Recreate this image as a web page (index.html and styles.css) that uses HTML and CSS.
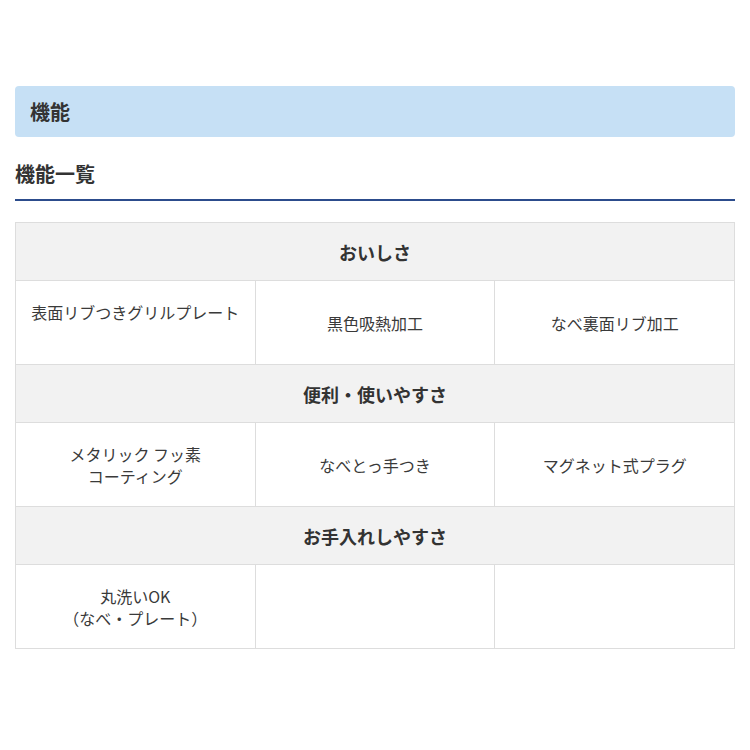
FILE: index.html
```html
<!DOCTYPE html>
<html lang="ja">
<head>
<meta charset="utf-8">
<link rel="stylesheet" href="styles.css">
</head>
<body>
<div class="page">
  <h2 class="section-title">機能</h2>
  <h3 class="sub-title">機能一覧</h3>
  <table class="features">
    <tr><th colspan="3">おいしさ</th></tr>
    <tr>
      <td>表面リブつきグリルプレート<br>&nbsp;</td>
      <td>黒色吸熱加工</td>
      <td>なべ裏面リブ加工</td>
    </tr>
    <tr><th colspan="3">便利・使いやすさ</th></tr>
    <tr>
      <td>メタリック フッ素<br>コーティング</td>
      <td>なべとっ手つき</td>
      <td>マグネット式プラグ</td>
    </tr>
    <tr><th colspan="3">お手入れしやすさ</th></tr>
    <tr>
      <td>丸洗いOK<br>（なべ・プレート）</td>
      <td></td>
      <td></td>
    </tr>
  </table>
</div>
</body>
</html>
```

FILE: styles.css
```css
html, body {
  margin: 0;
  padding: 0;
  background: #ffffff;
}
body {
  font-family: "Noto Sans CJK JP", "Noto Sans", sans-serif;
  color: #333333;
}
.page {
  padding: 86px 15px 0 15px;
}
.section-title {
  margin: 0;
  height: 51px;
  box-sizing: border-box;
  background: #c6e0f5;
  border-radius: 4px;
  padding: 0 15px;
  display: flex;
  align-items: center;
  font-size: 20px;
  font-weight: bold;
  line-height: 1;
}
.sub-title {
  margin: 25px 0 0 0;
  font-size: 20px;
  font-weight: bold;
  line-height: 24px;
  padding-bottom: 13px;
  border-bottom: 2px solid #2c4c8c;
}
.features {
  margin-top: 21px;
  width: 100%;
  border-collapse: collapse;
  table-layout: fixed;
}
.features th,
.features td {
  border: 1px solid #dddddd;
  text-align: center;
  vertical-align: middle;
  padding: 0 8px;
}
.features th {
  background: #f2f2f2;
  height: 57px;
  font-size: 18px;
  font-weight: bold;
}
.features td {
  background: #ffffff;
  height: 83px;
  font-size: 16px;
  line-height: 22px;
  color: #3a3a3a;
}
```
